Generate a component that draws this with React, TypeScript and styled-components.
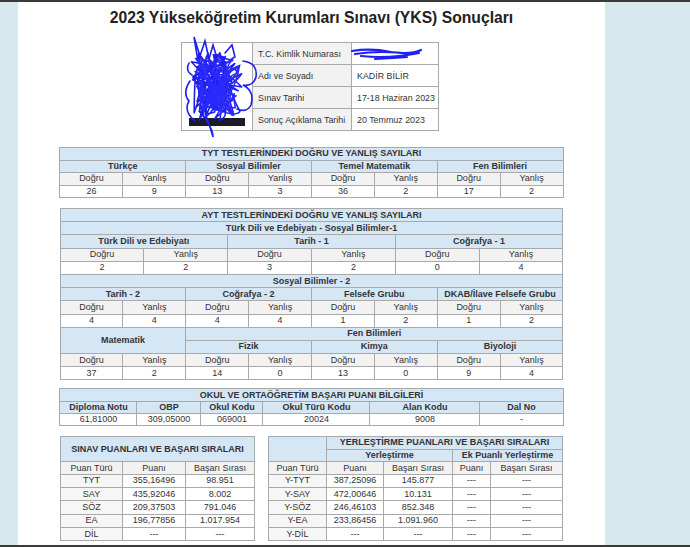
import React from 'react';
import styled, { createGlobalStyle } from 'styled-components';

const Global = createGlobalStyle`
  html, body { margin: 0; padding: 0; background: #d7e9ef; }
  body { font-family: "Liberation Sans", Arial, sans-serif; }
`;

const Screen = styled.div`
  width: 690px;
  height: 547px;
  box-sizing: border-box;
  background: #d7e9ef;
  border-top: 2px solid #3a3a3a;
  border-bottom: 2px solid #3a3a3a;
  display: flex;
  overflow: hidden;
`;

const Sheet = styled.main`
  margin-left: 18px;
  width: 587px;
  background: #fff;
  display: flex;
  flex-direction: column;
  align-items: center;
  color: #333;
`;

const Title = styled.h1`
  margin: 7px 0 0;
  font-size: 15.7px;
  line-height: 18px;
  font-weight: 700;
  color: #222;
`;

const InfoWrap = styled.section`
  position: relative;
  margin-top: 15px;
  margin-left: -3px;
`;

const InfoTable = styled.table`
  border-collapse: collapse;
  table-layout: fixed;
  width: 257px;
  font-size: 8.9px;
  color: #333;
`;

const PhotoCell = styled.td`
  border: 1px solid #a9a9a9;
  padding: 0;
  background: #fff;
`;

const InfoLabel = styled.td<{ $plain?: boolean }>`
  border: 1px solid #a9a9a9;
  background: ${p => (p.$plain ? '#fff' : '#f2f2f2')};
  height: 21px;
  padding: 0 0 0 5px;
  white-space: nowrap;
  overflow: visible;
`;

const Overlay = styled.svg`
  position: absolute;
  left: -8px;
  top: -8px;
  pointer-events: none;
`;

const Redact = styled.svg`
  display: block;
  margin-left: -6px;
  overflow: visible;
`;

type Tone = 'blue' | 'gray' | 'white' | 'soft';

const Table = styled.table<{ $width: number; $gap: number; $row: number }>`
  --row-h: ${p => p.$row}px;
  width: ${p => p.$width}px;
  margin-top: ${p => p.$gap}px;
  border-collapse: collapse;
  table-layout: fixed;
  font-size: 9px;
  color: #333;
`;

const Row = styled.tr<{ $row?: number }>`
  ${p => (p.$row ? `--row-h: ${p.$row}px;` : '')}
`;

const C = styled.td<{ $tone?: Tone; $bold?: boolean }>`
  border: 1px solid #a9a9a9;
  padding: 0;
  text-align: center;
  height: var(--row-h);
  line-height: 11px;
  background: ${p =>
    p.$tone === 'blue' ? '#d5e6f5' : p.$tone === 'gray' ? '#f2f2f2' : p.$tone === 'soft' ? '#f6f6f6' : '#fff'};
  font-weight: ${p => (p.$bold ? 700 : 400)};
  white-space: nowrap;
  overflow: hidden;
`;

const Bottom = styled.div`
  width: 503px;
  margin-top: 10px;
  display: flex;
  justify-content: space-between;
  align-items: flex-start;
`;

const Cols = ({ w }: { w: number[] }) => (
  <colgroup>
    {w.map((x, i) => (
      <col key={i} style={{ width: x }} />
    ))}
  </colgroup>
);

function scribble(seed: number, x0: number, y0: number, w: number, h: number, n: number) {
  let s = seed;
  const rnd = () => {
    s = (s * 9301 + 49297) % 233280;
    return s / 233280;
  };
  let d = `M${(x0 + rnd() * w).toFixed(1)} ${(y0 + rnd() * h).toFixed(1)}`;
  for (let i = 0; i < n; i++) {
    const cx = x0 + rnd() * w;
    const cy = y0 + rnd() * h;
    const x = x0 + rnd() * w;
    const y = y0 + rnd() * h;
    d += ` Q${cx.toFixed(1)} ${cy.toFixed(1)} ${x.toFixed(1)} ${y.toFixed(1)}`;
  }
  return d;
}

const PhotoScribble = () => (
  <Overlay width={96} height={108} viewBox="174 33 96 108">
    <rect x={190} y={117} width={56} height={8} fill="#1b1b2a" />
    <path d={scribble(7, 191, 50, 54, 70, 60)} fill="none" stroke="#1f1ff0" strokeWidth={1.6} strokeLinejoin="round" />
    <path d={scribble(31, 195, 56, 46, 60, 40)} fill="none" stroke="#2a2aff" strokeWidth={1.6} />
    <path
      d="M199 60 L195 36 L201 55 L206 40 L210 58 L214 44 L218 57 M226 52 L233 44 L236 56 M244 60 Q259 62 257 76 Q254 86 244 84 Q256 90 252 104 Q248 112 238 108 M200 110 Q214 126 214 136 Q210 122 206 112 M191 80 Q183 92 190 100 Q184 110 196 120 M190 62 Q186 70 193 74"
      fill="none"
      stroke="#1f1ff0"
      strokeWidth={1.6}
      strokeLinecap="round"
    />
  </Overlay>
);

const IdScribble = () => (
  <Redact width={74} height={14} viewBox="0 0 74 14">
    <path
      d="M1 4 Q20 1 40 5 Q60 8 70 3 M4 7 Q30 3 62 7 M10 9 Q38 12 68 6 M24 12 Q44 11 56 10"
      fill="none"
      stroke="#2020f2"
      strokeWidth={2.2}
      strokeLinecap="round"
    />
  </Redact>
);

const DY = ({ span = 1 }: { span?: number }) => (
  <>
    <C $tone="gray" colSpan={span}>Doğru</C>
    <C $tone="gray" colSpan={span}>Yanlış</C>
  </>
);

const App: React.FC = () => {
  const tyt = [
    ['Türkçe', 26, 9],
    ['Sosyal Bilimler', 13, 3],
    ['Temel Matematik', 36, 2],
    ['Fen Bilimleri', 17, 2],
  ] as const;
  const ayt1 = [
    ['Türk Dili ve Edebiyatı', 2, 2],
    ['Tarih - 1', 3, 2],
    ['Coğrafya - 1', 0, 4],
  ] as const;
  const ayt2 = [
    ['Tarih - 2', 4, 4],
    ['Coğrafya - 2', 4, 4],
    ['Felsefe Grubu', 1, 2],
    ['DKAB/İlave Felsefe Grubu', 1, 2],
  ] as const;
  const fen = [
    ['Fizik', 14, 0],
    ['Kimya', 13, 0],
    ['Biyoloji', 9, 4],
  ] as const;
  const sinav = [
    ['TYT', '355,16496', '98.951'],
    ['SAY', '435,92046', '8.002'],
    ['SÖZ', '209,37503', '791.046'],
    ['EA', '196,77856', '1.017.954'],
    ['DİL', '---', '---'],
  ];
  const yer = [
    ['Y-TYT', '387,25096', '145.877'],
    ['Y-SAY', '472,00646', '10.131'],
    ['Y-SÖZ', '246,46103', '852.348'],
    ['Y-EA', '233,86456', '1.091.960'],
    ['Y-DİL', '---', '---'],
  ];
  const eight = Array(8).fill(503 / 8);
  const tf = Array(24).fill(503 / 24);

  return (
    <Screen>
      <Global />
      <Sheet>
        <Title>2023 Yükseköğretim Kurumları Sınavı (YKS) Sonuçları</Title>

        <InfoWrap>
          <InfoTable>
            <Cols w={[71, 99, 87]} />
            <tbody>
              <tr>
                <PhotoCell rowSpan={4} />
                <InfoLabel>T.C. Kimlik Numarası</InfoLabel>
                <InfoLabel $plain>
                  <IdScribble />
                </InfoLabel>
              </tr>
              <tr>
                <InfoLabel>Adı ve Soyadı</InfoLabel>
                <InfoLabel $plain>KADİR BİLİR</InfoLabel>
              </tr>
              <tr>
                <InfoLabel>Sınav Tarihi</InfoLabel>
                <InfoLabel $plain>17-18 Haziran 2023</InfoLabel>
              </tr>
              <tr>
                <InfoLabel>Sonuç Açıklama Tarihi</InfoLabel>
                <InfoLabel $plain>20 Temmuz 2023</InfoLabel>
              </tr>
            </tbody>
          </InfoTable>
          <PhotoScribble />
        </InfoWrap>

        <Table $width={503} $gap={16} $row={11.5}>
          <Cols w={eight} />
          <tbody>
            <tr>
              <C $tone="blue" $bold colSpan={8}>TYT TESTLERİNDEKİ DOĞRU VE YANLIŞ SAYILARI</C>
            </tr>
            <tr>
              {tyt.map(t => (
                <C key={t[0]} $tone="blue" $bold colSpan={2}>{t[0]}</C>
              ))}
            </tr>
            <tr>
              {tyt.map(t => (
                <DY key={t[0]} />
              ))}
            </tr>
            <tr>
              {tyt.map(t => (
                <React.Fragment key={t[0]}>
                  <C>{t[1]}</C>
                  <C>{t[2]}</C>
                </React.Fragment>
              ))}
            </tr>
          </tbody>
        </Table>

        <Table $width={503} $gap={10} $row={12.2}>
          <Cols w={tf} />
          <tbody>
            <tr>
              <C $tone="blue" $bold colSpan={24}>AYT TESTLERİNDEKİ DOĞRU VE YANLIŞ SAYILARI</C>
            </tr>
            <tr>
              <C $tone="blue" $bold colSpan={24}>Türk Dili ve Edebiyatı - Sosyal Bilimler-1</C>
            </tr>
            <tr>
              {ayt1.map(t => (
                <C key={t[0]} $tone="blue" $bold colSpan={8}>{t[0]}</C>
              ))}
            </tr>
            <tr>
              {ayt1.map(t => (
                <DY key={t[0]} span={4} />
              ))}
            </tr>
            <tr>
              {ayt1.map(t => (
                <React.Fragment key={t[0]}>
                  <C colSpan={4}>{t[1]}</C>
                  <C colSpan={4}>{t[2]}</C>
                </React.Fragment>
              ))}
            </tr>
            <tr>
              <C $tone="blue" $bold colSpan={24}>Sosyal Bilimler - 2</C>
            </tr>
            <tr>
              {ayt2.map(t => (
                <C key={t[0]} $tone="blue" $bold colSpan={6}>{t[0]}</C>
              ))}
            </tr>
            <tr>
              {ayt2.map(t => (
                <DY key={t[0]} span={3} />
              ))}
            </tr>
            <tr>
              {ayt2.map(t => (
                <React.Fragment key={t[0]}>
                  <C colSpan={3}>{t[1]}</C>
                  <C colSpan={3}>{t[2]}</C>
                </React.Fragment>
              ))}
            </tr>
            <tr>
              <C $tone="blue" $bold colSpan={6} rowSpan={2}>Matematik</C>
              <C $tone="blue" $bold colSpan={18}>Fen Bilimleri</C>
            </tr>
            <tr>
              {fen.map(t => (
                <C key={t[0]} $tone="blue" $bold colSpan={6}>{t[0]}</C>
              ))}
            </tr>
            <tr>
              <DY span={3} />
              {fen.map(t => (
                <DY key={t[0]} span={3} />
              ))}
            </tr>
            <tr>
              <C colSpan={3}>37</C>
              <C colSpan={3}>2</C>
              {fen.map(t => (
                <React.Fragment key={t[0]}>
                  <C colSpan={3}>{t[1]}</C>
                  <C colSpan={3}>{t[2]}</C>
                </React.Fragment>
              ))}
            </tr>
          </tbody>
        </Table>

        <Table $width={503} $gap={8} $row={11.3}>
          <Cols w={[77, 64, 62, 107, 110, 83]} />
          <tbody>
            <tr>
              <C $tone="blue" $bold colSpan={6}>OKUL VE ORTAÖĞRETİM BAŞARI PUANI BİLGİLERİ</C>
            </tr>
            <tr>
              {['Diploma Notu', 'OBP', 'Okul Kodu', 'Okul Türü Kodu', 'Alan Kodu', 'Dal No'].map(h => (
                <C key={h} $tone="blue" $bold>{h}</C>
              ))}
            </tr>
            <tr>
              {['61,81000', '309,05000', '069001', '20024', '9008', '-'].map((v, i) => (
                <C key={i}>{v}</C>
              ))}
            </tr>
          </tbody>
        </Table>

        <Bottom>
          <Table $width={194} $gap={0} $row={12.3}>
            <Cols w={[62, 63, 69]} />
            <tbody>
              <Row $row={24}>
                <C $tone="blue" $bold colSpan={3}>SINAV PUANLARI VE BAŞARI SIRALARI</C>
              </Row>
              <Row $row={11.5}>
                <C $tone="gray">Puan Türü</C>
                <C $tone="gray">Puanı</C>
                <C $tone="gray">Başarı Sırası</C>
              </Row>
              {sinav.map(r => (
                <tr key={r[0]}>
                  <C $tone="soft">{r[0]}</C>
                  <C>{r[1]}</C>
                  <C>{r[2]}</C>
                </tr>
              ))}
            </tbody>
          </Table>

          <Table $width={294} $gap={0} $row={12.3}>
            <Cols w={[58, 57, 69, 38, 72]} />
            <tbody>
              <Row $row={11.3}>
                <C $tone="blue" rowSpan={2} />
                <C $tone="blue" $bold colSpan={4}>YERLEŞTİRME PUANLARI VE BAŞARI SIRALARI</C>
              </Row>
              <Row $row={11.7}>
                <C $tone="blue" $bold colSpan={2}>Yerleştirme</C>
                <C $tone="blue" $bold colSpan={2}>Ek Puanlı Yerleştirme</C>
              </Row>
              <Row $row={11.5}>
                <C $tone="gray">Puan Türü</C>
                <C $tone="gray">Puanı</C>
                <C $tone="gray">Başarı Sırası</C>
                <C $tone="gray">Puanı</C>
                <C $tone="gray">Başarı Sırası</C>
              </Row>
              {yer.map(r => (
                <tr key={r[0]}>
                  <C $tone="soft">{r[0]}</C>
                  <C>{r[1]}</C>
                  <C>{r[2]}</C>
                  <C>---</C>
                  <C>---</C>
                </tr>
              ))}
            </tbody>
          </Table>
        </Bottom>
      </Sheet>
    </Screen>
  );
};

export default App;
